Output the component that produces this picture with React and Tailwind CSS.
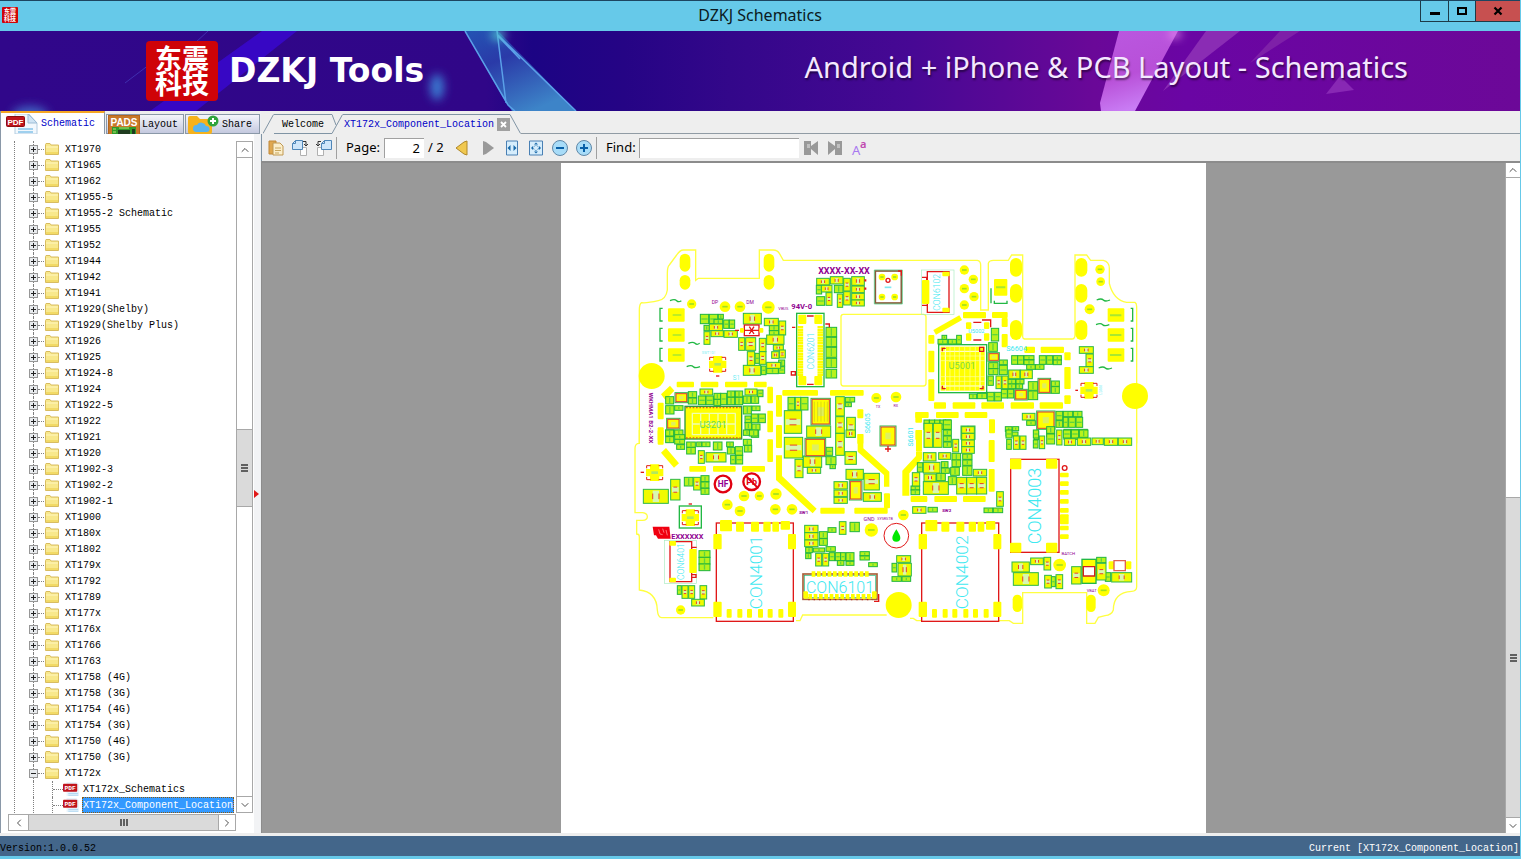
import React, { useState } from 'react';
import { ChevronUp, ChevronDown, ChevronLeft, ChevronRight } from 'lucide-react';

const FOLDERS = [
  'XT1970', 'XT1965', 'XT1962', 'XT1955-5', 'XT1955-2 Schematic', 'XT1955', 'XT1952', 'XT1944',
  'XT1942', 'XT1941', 'XT1929(Shelby)', 'XT1929(Shelby Plus)', 'XT1926', 'XT1925', 'XT1924-8',
  'XT1924', 'XT1922-5', 'XT1922', 'XT1921', 'XT1920', 'XT1902-3', 'XT1902-2', 'XT1902-1', 'XT1900',
  'XT180x', 'XT1802', 'XT179x', 'XT1792', 'XT1789', 'XT177x', 'XT176x', 'XT1766', 'XT1763',
  'XT1758 (4G)', 'XT1758 (3G)', 'XT1754 (4G)', 'XT1754 (3G)', 'XT1750 (4G)', 'XT1750 (3G)', 'XT172x',
];
const FILES = ['XT172x_Schematics', 'XT172x_Component_Location'];

// "x,y,w,h x,y,w,h ..." -> [[x, y, w, h], ...]
const parse = (list) => list.trim().split(/\s+/).map((item) => item.split(',').map(Number));

/* ---------- board drawing ---------- */

// plain copper pads
function Pads({ list }) {
  return parse(list).map(([x, y, w, h], i) => (
    <rect key={i} x={x} y={y} width={w} height={h} rx="3" fill="#ffff00" />
  ));
}

// test points, x,y,r
function Dots({ list }) {
  return parse(list).map(([x, y, r], i) => (
    <g key={i}>
      <circle cx={x} cy={y} r={r} fill="#ffff00" />
      {r < 25 && <path d={`M${x - r / 2},${y}h${r}`} stroke="#a0e020" strokeWidth="5" />}
    </g>
  ));
}

function Ovals({ list }) {
  return parse(list).map(([x, y, rx, ry], i) => (
    <rect key={i} x={x - rx} y={y - ry} width={rx * 2} height={ry * 2} rx={rx} fill="#ffff00" />
  ));
}

// small passives in green courtyards
function Small({ list }) {
  return parse(list).map(([x, y, w, h], i) => (
    <g key={i}>
      <rect x={x} y={y} width={w} height={h} fill="#b8f21c" stroke="#1fb53c" strokeWidth="3" />
      {w >= h ? (
        <path d={`M${x + w / 2},${y + 3}v${h - 6}`} stroke="#5fd63c" strokeWidth="4" />
      ) : (
        <path d={`M${x + 3},${y + h / 2}h${w - 6}`} stroke="#5fd63c" strokeWidth="4" />
      )}
    </g>
  ));
}

// two pad parts with a body gap and red silk ticks
function Parts({ list }) {
  return parse(list).map(([x, y, w, h], i) => {
    const wide = w >= h;
    const gap = Math.max(w, h) / 4;
    const cx = x + w / 2;
    const cy = y + h / 2;
    return (
      <g key={i}>
        <rect x={x} y={y} width={w} height={h} fill="#f0fb00" stroke="#2db84a" strokeWidth="3" />
        {wide ? (
          <>
            <rect x={cx - gap / 2} y={y + 4} width={gap} height={h - 8} fill="#d8f8b0" />
            <path d={`M${cx - gap / 2},${cy - h / 5}v${h / 2.5}M${cx + gap / 2},${cy - h / 5}v${h / 2.5}`} stroke="#e8402a" strokeWidth="3" />
          </>
        ) : (
          <>
            <rect x={x + 4} y={cy - gap / 2} width={w - 8} height={gap} fill="#d8f8b0" />
            <path d={`M${cx - w / 5},${cy - gap / 2}h${w / 2.5}M${cx - w / 5},${cy + gap / 2}h${w / 2.5}`} stroke="#e8402a" strokeWidth="3" />
          </>
        )}
      </g>
    );
  });
}

// ICs with a red body outline
function Chips({ list }) {
  return parse(list).map(([x, y, w, h], i) => (
    <g key={i}>
      <rect x={x} y={y} width={w} height={h} fill="#fff" stroke="#2db84a" strokeWidth="3" />
      <rect x={x + 3} y={y + 3} width={w - 6} height={h - 6} fill="#ffff00" stroke="#d8402a" strokeWidth="3" />
      <rect x={x + w / 3} y={y + h / 3} width={w / 3} height={h / 3} fill="#dff060" />
    </g>
  ));
}

function CrossPart({ x, y }) {
  return (
    <g transform={`translate(${x} ${y})`}>
      <path d="M12,0h28v14h12v22H40v14H12V36H0V14h12z" fill="#ffff00" />
      <path d="M2,12V4h12M38,4h12v8M2,38v8h12M38,46h12v-8" fill="none" stroke="#e02010" strokeWidth="3" />
      <path d="M16,25h20" stroke="#b0e860" strokeWidth="8" />
    </g>
  );
}

function Label({ x, y, size, fill = '#40e8f0', rotate = 0, weight = 300, children }) {
  return (
    <text
      transform={`translate(${x} ${y}) rotate(${rotate})`}
      fontSize={size}
      fontWeight={weight}
      fill={fill}
      textAnchor="middle"
      dominantBaseline="central"
      className="font-['Roboto',sans-serif]"
    >
      {children}
    </text>
  );
}

function SimSlot({ x, y, name }) {
  return (
    <g transform={`translate(${x} ${y})`}>
      <rect width="231" height="295" fill="none" stroke="#e01818" strokeWidth="4" />
      <Pads list="11,-9,36,34 59,-4,24,30 104,-4,24,30 141,-4,22,30 168,-4,20,30 193,-6,28,26 -9,33,25,46 215,33,24,46 -9,236,25,46 215,236,24,46 31,258,15,26 63,258,15,26 92,258,15,26 125,258,15,26 154,258,15,26 186,258,15,26" />
      <Label x={120} y={148} size={52} rotate={-90}>{name}</Label>
    </g>
  );
}

const line = { fill: 'none', stroke: '#ffff40', strokeWidth: 4 };
const green = { fill: 'none', stroke: '#22b844', strokeWidth: 4 };
const red = { fill: 'none', stroke: '#e01818', strokeWidth: 4 };
const purple = '#900090';

function TopLeft() {
  return (
    <g transform="translate(69 77) scale(0.33333)">
      <path {...line} d="M780,61H460L448,40Q442,30 430,30H388V115H205L197,121V30H160Q150,30 140,45L118,75Q112,80 112,100V150Q108,178 85,182Q50,190 35,188Q28,192 28,210V610" />
      <path {...line} d="M780,223H640Q633,223 633,230V430Q633,438 640,438H780" />
      <Ovals list="165,68,16,27 165,127,16,22 417,68,16,27 417,127,16,22" />
      <Dots list="65,408,39 185,192,14 285,200,16 330,200,16 415,202,19 739,474,15" />
      <Pads list="114,205,50,40 114,265,50,40 114,325,50,40" />
      <path d="M128,225h26M128,285h26M128,345h26" stroke="#a8e830" strokeWidth="5" />
      <path {...green} d="M98,205H90V243H98M98,265H90V303H98M98,325H90V363H98M120,182q14,-6 20,0t14,0M175,310q14,-6 20,0t14,0M170,380q14,-6 20,0t20,0" />
      <Pads list="140,425,52,17 212,425,53,17 285,425,67,17 372,425,38,17 412,440,17,50 412,512,17,65 457,450,107,17 600,450,101,17 438,465,18,65 438,555,18,45 83,488,18,50 83,562,18,40 682,508,18,27 682,582,18,30" />
      <path d="M93,463l27,-26 13,15 -27,28z" fill="#ffff00" />

      <Small list="211,223,25,28 238,223,25,28 265,223,15,14 252,238,26,14 281,240,16,25 298,240,16,25 222,256,16,16 418,256,28,16 418,272,28,14 375,340,14,30 446,360,18,18 446,380,18,20 410,385,35,16 394,378,14,26" />
      <Parts list="238,252,40,20 222,275,18,38 243,272,37,18 282,272,40,20 340,220,54,32 403,235,42,22 447,243,20,42 410,285,52,28 326,293,18,38 347,293,30,38 388,295,20,40 430,315,30,16 448,330,18,24 425,335,22,20 352,335,22,42 388,335,20,38 410,367,42,18 340,376,52,30" />
      <rect x="343" y="255" width="44" height="32" {...red} />
      <path {...red} d="M343,271h44M358,260l14,22M372,260l-14,22M315,271h12" />
      <Pads list="330,264,12,14 388,264,12,14" />
      <CrossPart x={237} y={348} />
      <path {...red} d="M258,408h10" />
      <Label x={236} y={338} size={11}>SWT101</Label>
      <Small list="559,136,16,26 560,170,24,26 613,136,26,22 588,262,32,28 588,292,32,28 588,322,32,30 588,355,32,28 588,388,32,26" />
      <Parts list="560,115,38,20 601,110,38,22 574,136,32,20 588,158,18,38 641,115,20,38 641,155,20,40 622,162,16,40 665,110,38,26 665,138,38,20 665,160,38,20 665,180,38,18" />
      <path d="M703,121h6M703,146h6" stroke="#e01818" strokeWidth="7" />

      {/* CON6201 */}
      <rect x="500" y="220" width="82" height="220" fill="#fff" stroke="#22b844" strokeWidth="4" />
      <path d="M511,258V408M571,258V408" stroke="#ffff00" strokeWidth="17" strokeDasharray="7 1" />
      <Pads list="505,224,24,28 553,224,24,28 505,408,24,28 553,408,24,28" />
      <path {...red} d="M531,228h20M531,433h20M486,262h10M484,395h12v10h-12zM586,252h12v10" />
      <Label x={543} y={333} size={26} rotate={-90}>CON6201</Label>

      {/* U3201 */}
      <rect x="165" y="499" width="170" height="98" fill="#ffff00" stroke="#2f9a40" strokeWidth="4" />
      <path d="M168,503h164M168,594h164" stroke="#d86020" strokeWidth="4" strokeDasharray="5 5" />
      <path d="M185,520h132M185,552h132M185,584h132M187,520v64M212,520v64M238,520v64M264,520v64M290,520v64M316,520v64" stroke="#f0ffb0" strokeWidth="4" />
      <Label x={249} y={554} size={28} fill="#60d860" weight={400}>U3201</Label>
      <Small list="107,470,24,22 175,455,25,18 175,474,25,18 205,468,22,26 228,468,22,26 252,460,20,18 252,478,20,18 272,460,18,34 292,453,22,18 292,472,22,22 316,453,22,18 316,472,22,22 340,468,22,22 364,468,22,22 383,450,16,20 107,497,25,25 134,497,25,14 107,570,25,20 134,570,25,20 340,498,24,24 366,498,24,14 364,522,20,26 386,522,20,26 345,528,18,20 345,548,20,20 366,552,24,18 340,570,22,16 364,572,22,20" />
      <Parts list="210,447,38,18 345,447,36,18" />
      <Chips list="135,458,38,30 110,535,40,32" />

      <Small list="474,472,20,38 512,472,22,38 646,472,28,14 646,488,18,12" />
      <Parts list="496,472,16,38 463,512,52,68 617,470,26,58 617,530,26,50 650,532,26,60 530,558,72,34" />
      <Chips list="543,475,58,80" />
      <path d="M553,485v60M563,485v60M573,485v60M583,485v60M592,485v60" stroke="#c8c820" strokeWidth="2" />

      {/* square part next to the marking */}
      <rect x="736" y="93" width="78" height="96" fill="#fff" stroke="#8a5a3a" strokeWidth="5" />
      <path d="M733,90h84v102h-84z" fill="none" stroke="#40c878" strokeWidth="2" />
      <Dots list="756,111,10 794,111,10 756,171,10 794,171,10" />
      <path {...red} d="M804,93h10v14" />
      <circle cx="774" cy="121" r="6" {...red} />
      <path d="M764,142h20" stroke="#80e8f0" strokeWidth="5" />

      <Label x={642} y={92} size={27} fill={purple} weight={700}>XXXX-XX-XX</Label>
      <Label x={515} y={199} size={23} fill={purple} weight={700}>94V-0</Label>
      <Label x={255} y={185} size={15} fill={purple} weight={400}>DP</Label>
      <Label x={360} y={185} size={15} fill={purple} weight={400}>DM</Label>
      <Label x={460} y={207} size={12} fill={purple} weight={400}>VBUS</Label>
      <Label x={65} y={534} size={18} fill={purple} weight={700} rotate={90}>WKHMA1 B2-2-XX</Label>
      <Label x={319} y={415} size={19}>S1</Label>
      <Label x={715} y={550} size={21} rotate={-90} weight={400}>S6605</Label>
      <Label x={744} y={500} size={11} fill={purple} weight={400}>TX</Label>
    </g>
  );
}

function TopRight() {
  return (
    <g transform="translate(319 77) scale(0.33333)">
      <path {...line} d="M0,61H292Q302,63 302,75V210H325V70Q327,61 340,61H385L395,45H428V290Q428,298 440,297H575Q585,297 585,285V45H620L632,61H670Q688,65 688,85V130Q700,180 740,187H765Q770,190 770,200V610" />
      <path {...line} d="M0,223H130Q138,223 138,230V430Q138,438 130,438H0" />
      <Ovals list="408,82,18,28 408,160,18,28 408,270,18,30 604,82,18,28 604,160,18,28 604,270,18,30" />
      <Dots list="253,90,14 280,118,14 253,146,14 282,170,14 253,195,14 660,88,14 662,125,13 629,208,15 765,468,39 48,471,16" />
      <Pads list="342,117,40,50 683,205,50,40 683,265,50,40 683,325,50,40" />
      <path d="M348,142h28M690,226h34M690,285h34M690,345h34" stroke="#a8e830" strokeWidth="6" />
      <path {...green} d="M752,205H758V243H752M752,265H758V303H752M752,325H758V363H752M343,182V190H381V182M333,145V190M650,180q14,-6 20,0t20,0M648,254q14,-6 20,0t20,0M656,384q14,-6 20,0t20,0" />
      <Pads list="249,216,69,19 145,285,18,26 145,332,18,65 145,418,18,65 336,216,47,18 365,234,18,27 365,282,18,40 162,487,36,19 218,487,68,19 304,487,68,19 392,487,70,19 479,487,70,19 106,516,40,18 168,516,68,18 254,516,68,18 106,516,20,32 106,570,20,30 327,538,18,42 433,320,32,19 482,320,70,19 553,337,19,24 553,381,19,66 553,466,19,26" />
      <path d="M160,270l78,-44 8,14 -78,44z" fill="#ffff00" />

      {/* CON6102 */}
      <rect x="124" y="90" width="98" height="133" fill="none" stroke="#a8ecc0" strokeWidth="2" />
      <path {...red} d="M142,95h65v122h-65zM126,112h14v8M126,196h14" />
      <Pads list="126,120,22,72 187,95,22,14 187,203,22,14" />
      <Label x={170} y={157} size={26} rotate={-90}>CON6102</Label>

      <Pads list="258,247,16,20 258,280,16,22 312,247,16,20 312,280,16,22" />
      <path {...red} d="M280,247h24M280,300h24M306,240h26v22" />
      <Label x={289} y={274} size={17} weight={400}>U5002</Label>

      {/* U5001 */}
      <rect x="176" y="314" width="144" height="144" fill="#fff" stroke="#22b844" strokeWidth="4" />
      <rect x="182" y="320" width="132" height="132" fill="#ffff00" />
      <path d="M182,334h132M182,438h132M196,320v132M300,320v132" stroke="#fffff0" strokeWidth="3" />
      <path d="M182,348h132M182,362h132M182,410h132M182,424h132M210,320v132M224,320v132M238,320v132M254,320v132M270,320v132M286,320v132" stroke="#ffffa0" strokeWidth="2" />
      <path {...red} d="M187,334v-9h10M187,437v9h10M299,446h10v-9M299,322h12v12h-12z" />
      <Label x={246} y={378} size={28} fill="#80dc40" weight={400}>U5001</Label>

      <Small list="174,298,28,14 186,286,14,12 205,298,24,14 230,286,14,26 334,265,22,38 326,308,26,26 326,368,28,18 326,386,28,18 358,360,24,14 358,376,24,28 395,347,18,26 413,347,18,26 432,347,30,12 432,360,30,14 478,347,20,26 500,347,18,26 520,347,24,14 520,360,24,14 440,374,26,14 466,374,26,14 383,418,24,14 408,418,24,14 383,432,24,14 408,432,20,14 324,408,16,28 364,448,18,26 383,448,18,26 445,453,28,26 445,425,28,26 514,423,24,16 514,440,24,20 268,462,22,14 292,460,28,16 322,457,20,26 344,457,20,26" />
      <Parts list="348,408,16,38 366,408,18,38 386,390,34,26 421,390,36,26 598,320,42,20 618,342,22,38 598,380,42,20 427,520,38,20" />
      <Chips list="324,338,34,26 404,448,38,32 474,415,38,45 470,513,55,55" />
      <CrossPart x={601} y={426} />
      <path {...red} d="M586,451h8" />
      <Label x={664} y={450} size={11} rotate={-90}>U5000</Label>

      <Small list="440,542,26,14 528,514,20,26 550,514,28,16 580,514,26,16 528,542,20,20 550,532,14,30 566,532,20,30 588,532,20,30 132,540,16,28 148,540,16,28 164,540,16,28 180,540,16,28 196,540,16,28 376,560,20,14 398,560,18,12 378,576,36,12 462,575,14,24 500,570,24,20 552,568,20,30 574,568,20,30 596,568,26,28" />
      <Parts list="243,558,20,40 265,558,20,40" />

      <Label x={410} y={325} size={22} weight={400}>S6604</Label>
      <Label x={93} y={590} size={21} rotate={-90} weight={400}>S6601</Label>
      <Label x={47} y={497} size={11} fill={purple} weight={400}>RX</Label>
    </g>
  );
}

function BottomLeft() {
  return (
    <g transform="translate(69 267) scale(0.33333)">
      <path {...line} d="M28,0V40Q15,40 15,55V248H38Q52,250 52,260T38,271H20V312Q28,312 28,320V480Q80,485 82,540Q84,563 95,563H250M498,572H510L518,555H750" />
      <Pads list="83,0,18,44 178,108,50,17 249,108,68,17 336,108,69,17 412,28,17,68 438,0,18,54 571,233,73,18 673,233,100,18 762,190,18,45" />
      <path d="M93,68l15,-14 39,46 -15,13zM438,76h18v62L560,236l-12,14L438,150zM683,12h17v43l78,70v45h-16v-35L683,65z" fill="#ffff00" />
      <Dots list="342,198,16 388,198,14 438,192,17 292,224,16 330,243,16 436,238,16 486,238,16 724,300,20 152,540,14" />

      <Small list="107,0,24,18 107,20,24,18 140,44,24,14 134,14,30,14 134,28,30,14 170,36,26,16 170,52,26,20 200,36,14,14 216,36,24,14 250,36,26,24 290,36,20,14 292,52,22,20 316,50,22,26 302,76,14,26 318,76,20,26 340,28,24,18 343,46,22,20 358,0,26,18 588,52,20,24 588,80,30,24 600,104,16,12 163,142,26,26 213,137,24,18 213,156,24,18 213,175,24,18 207,362,33,20 207,382,33,20 207,402,33,20 142,467,12,26 568,305,24,20 568,326,24,20 594,293,24,14 660,277,28,28 527,352,20,16 527,370,16,16 550,354,34,12 588,350,28,14 598,368,16,24 616,368,16,24 632,368,14,24 648,368,24,24 622,392,20,14 648,394,24,12 690,365,28,12 690,378,28,12 716,398,26,12" />
      <Parts list="205,62,18,38 228,68,60,28 463,22,55,62 495,88,24,55 520,78,55,34 532,112,40,18 617,10,26,66 645,65,34,38 648,0,28,22 648,118,52,30 612,155,40,22 612,180,40,20 612,202,40,18 702,130,46,50 700,188,54,26 40,178,75,42 122,148,28,62 191,142,20,38 156,467,18,38 176,467,18,38 210,467,20,40 185,508,38,20 524,286,40,22 524,308,40,22 524,330,40,20 628,275,20,38 557,370,18,38 578,370,18,38" />
      <Chips list="525,25,62,55 658,152,38,58" />
      <CrossPart x={48} y={103} />
      <path {...red} d="M32,127h10" />
      <rect x="148" y="228" width="66" height="66" fill="#fff" stroke="#22b844" strokeWidth="4" />
      <CrossPart x={155} y={238} />
      <path {...red} d="M176,222h10" />

      <circle cx="279" cy="162" r="25" fill="none" stroke="#e00010" strokeWidth="7" />
      <Label x={279} y={163} size={25} fill={purple} weight={700}>HF</Label>
      <circle cx="365" cy="155" r="25" fill="none" stroke="#e00010" strokeWidth="7" />
      <Label x={365} y={156} size={27} fill="#e00010" weight={700}>Pb</Label>
      <path d="M348,138l34,34" stroke="#e00010" strokeWidth="6" />

      {/* UL mark */}
      <path d="M68,290h50l4,36h-38l-6,-10h-6z" fill="#f00010" />
      <path d="M86,298l4,14 8,2M98,296l4,12M108,300l4,16" fill="none" stroke="#ffb0b0" strokeWidth="2" />
      <Label x={172} y={319} size={22} fill={purple} weight={700}>EXXXXXX</Label>

      {/* CON6401 */}
      <rect x="103" y="332" width="97" height="128" fill="none" stroke="#a8ecc0" strokeWidth="2" />
      <path {...red} d="M120,335h65v120h-65zM186,352h14M186,434h12v8h-12" />
      <Pads list="178,357,22,72 118,333,20,14 118,443,20,14" />
      <Label x={152} y={395} size={26} rotate={-90}>CON6401</Label>

      <SimSlot x={259} y={279} name="CON4001" />

      {/* CON6101 */}
      <rect x="519" y="432" width="222" height="76" fill="#fff" stroke="#a8603a" strokeWidth="5" />
      <rect x="524" y="437" width="212" height="66" fill="none" stroke="#22b87a" strokeWidth="2" />
      <path d="M545,432H718M535,500H728" stroke="#ffff00" strokeWidth="16" strokeDasharray="11 5" />
      <path d="M535,509H728" stroke="#b02020" strokeWidth="4" strokeDasharray="4 12" />
      <Pads list="520,484,14,22 726,484,14,22" />
      <path {...red} d="M732,514h14v-22" />
      <Label x={630} y={473} size={48}>CON6101</Label>

      <Label x={521} y={249} size={13} fill={purple} weight={700}>SW1</Label>
      <Label x={717} y={268} size={16} fill={purple} weight={400}>GND</Label>
      <Label x={765} y={268} size={11} fill={purple} weight={400}>SYSRSTB</Label>
    </g>
  );
}

function BottomRight() {
  return (
    <g transform="translate(319 267) scale(0.33333)">
      <path {...line} d="M770,0V470Q770,483 755,484Q700,487 700,540Q695,555 675,557L655,562L645,580H620V488H428V580H400L388,572H355M125,572H110L100,565H90M0,555H20" />
      <Pads list="108,0,18,65 92,198,50,18 163,198,68,18 249,198,68,18 326,30,18,66 326,117,18,68" />
      <path d="M108,65h18v22L88,130v67H67v-75L108,78z" fill="#ffff00" />
      <Ovals list="412,520,14,26 633,520,14,26" />
      <Dots list="70,255,16 539,405,19 671,481,18 56,525,39" />

      <Chips list="0,-12,48,60" />
      <path {...red} d="M24,48v18M15,57h18" />
      <circle cx="49" cy="317" r="37" fill="none" stroke="#e01818" strokeWidth="3" />
      <path d="M49,298q12,18 12,26a12,11 0 0 1 -24,0q0,-8 12,-26z" fill="#00e800" />

      <Small list="190,-30,24,28 190,0,24,16 190,18,24,16 190,36,24,16 112,98,16,28 93,168,26,12 93,180,26,14 170,130,26,22 184,95,20,18 184,114,24,16 216,70,26,20 216,90,26,20 212,112,26,24 205,140,24,24 248,72,28,16 248,90,28,16 248,108,28,28 378,0,18,24 380,28,14,30 460,0,16,24 460,30,14,24 500,-10,24,20 500,12,24,30 550,0,22,24 574,0,22,24 598,0,26,22 312,234,26,14 340,234,28,14 144,232,28,14 36,400,14,26 36,440,28,14 66,440,26,14 514,440,12,30 650,382,28,16 676,428,16,26" />
      <Parts list="132,-20,26,72 160,-20,26,72 218,28,18,38 245,-10,38,20 245,10,38,20 245,30,38,20 245,50,38,20 130,68,38,25 176,68,36,20 130,97,50,32 97,128,22,40 130,155,75,38 132,132,36,22 280,118,40,20 230,142,30,50 260,142,30,50 290,142,30,50 400,18,18,40 420,18,18,40 478,18,16,38 530,0,16,45 553,26,34,20 592,24,40,22 636,24,34,20 673,24,40,22 715,24,40,22 350,185,20,44 98,230,40,20 50,377,42,20 54,400,40,38 396,396,52,30 400,428,75,38 452,384,38,20 492,382,20,38 494,436,20,38 528,434,20,42 575,410,28,52 650,400,28,50 695,428,60,28" />
      <rect x="606" y="388" width="42" height="72" fill="#ffff00" stroke="#22b844" strokeWidth="4" />
      <path d="M610,410h34v28h-34z" fill="#fff" stroke="#d02020" strokeWidth="4" />
      <Pads list="686,394,16,24 738,394,16,24" />
      <path d="M702,392h34v30h-34z" fill="none" stroke="#e06050" strokeWidth="4" />

      <SimSlot x={125} y={279} name="CON4002" />

      {/* CON4003 */}
      <rect x="392" y="88" width="145" height="279" {...red} />
      <Pads list="390,86,34,32 498,86,34,30 390,338,34,30 498,338,34,30 540,128,26,14 540,154,26,14 540,180,26,14 540,207,26,14 540,234,26,14 540,253,26,30 540,287,26,14 540,313,26,14" />
      <circle cx="554" cy="114" r="7" {...red} />
      <Label x={465} y={228} size={54} rotate={-90}>CON4003</Label>

      <Label x={200} y={242} size={13} fill={purple} weight={700}>SW2</Label>
      <Label x={565} y={372} size={13} fill={purple} weight={400}>BATCH</Label>
      <Label x={635} y={482} size={12} fill={purple} weight={400}>VBAT</Label>
    </g>
  );
}

function Board() {
  return (
    <svg viewBox="0 0 645 670" className="block w-full" role="img" aria-label="XT172x component location">
      <TopLeft />
      <TopRight />
      <BottomLeft />
      <BottomRight />
    </svg>
  );
}

/* ---------- window chrome ---------- */

function SealLogo({ className }) {
  return (
    <svg viewBox="0 0 72 60" preserveAspectRatio="none" className={className} aria-hidden="true">
      <rect width="72" height="60" rx="4" fill="#cf0308" />
      <g fill="#fff" fontSize="27" fontWeight="700" textAnchor="middle" className="font-['Noto_Sans_CJK_SC',sans-serif]">
        <text x="36" y="28">东震</text>
        <text x="36" y="53">科技</text>
      </g>
    </svg>
  );
}

function TitleBar() {
  return (
    <header className="flex h-[31px] shrink-0 items-start border-t border-[#1d4560] bg-[#66c9e9]">
      <div className="flex w-[100px] pl-[2px] pt-[6px]">
        <SealLogo className="size-4" />
      </div>
      <h1 className="flex-1 text-center font-['Noto_Sans',sans-serif] text-[16px] leading-[29px] text-[#0b1a22]">DZKJ Schematics</h1>
      <div className="flex h-[21px] w-[100px] justify-end">
        <button aria-label="Minimize" className="flex w-[28px] items-center justify-center border-b border-l border-[#1d3a48]">
          <svg viewBox="0 0 10 10" className="size-[10px]"><path d="M0,6h10v3H0z" fill="#000" /></svg>
        </button>
        <button aria-label="Maximize" className="flex w-[27px] items-center justify-center border-b border-l border-[#1d3a48]">
          <svg viewBox="0 0 10 10" className="size-[10px]"><path d="M1,2h8v6H1z" fill="none" stroke="#000" strokeWidth="2" /></svg>
        </button>
        <button aria-label="Close" className="flex w-[45px] items-center justify-center border-b border-l border-[#1d3a48] bg-[#c75050]">
          <svg viewBox="0 0 10 10" className="size-[10px]"><path d="M1.5,1.5l7,7M8.5,1.5l-7,7" stroke="#000" strokeWidth="2.2" /></svg>
        </button>
      </div>
    </header>
  );
}

function Banner() {
  return (
    <div className="relative flex h-20 shrink-0 items-center overflow-hidden bg-[#300989]">
      <svg viewBox="0 0 1520 80" preserveAspectRatio="none" className="absolute inset-0 size-full" aria-hidden="true">
        <defs>
          <linearGradient id="bg" x1="0" x2="1">
            <stop offset="0" stopColor="#30078a" />
            <stop offset="0.32" stopColor="#300688" />
            <stop offset="0.35" stopColor="#1c0484" />
            <stop offset="0.41" stopColor="#250485" />
            <stop offset="0.48" stopColor="#33078a" />
            <stop offset="0.6" stopColor="#470894" />
            <stop offset="0.72" stopColor="#6a0898" />
            <stop offset="0.78" stopColor="#6a05a4" />
            <stop offset="1" stopColor="#6c0898" />
          </linearGradient>
          <linearGradient id="blue" x1="0" y1="0" x2="0.6" y2="1">
            <stop offset="0" stopColor="#2454b4" />
            <stop offset="0.4" stopColor="#2a3aa8" />
            <stop offset="1" stopColor="#3d84c8" />
          </linearGradient>
          <linearGradient id="pink" x1="0" y1="0" x2="0.3" y2="1">
            <stop offset="0" stopColor="#ba58e0" />
            <stop offset="0.6" stopColor="#b850d8" />
            <stop offset="1" stopColor="#c97cf4" />
          </linearGradient>
          <filter id="soft" x="-100%" y="-100%" width="300%" height="300%">
            <feGaussianBlur stdDeviation="5" />
          </filter>
        </defs>
        <rect width="1520" height="80" fill="url(#bg)" />
        <path d="M150,80L262,0H297L196,80z" fill="#3908d8" opacity="0.75" />
        <path d="M195,12L208,0M125,52L170,18" stroke="#4a4ac8" opacity="0.6" />
        <path d="M465,0H498L576,80H512L505,70z" fill="url(#blue)" />
        <path d="M465,0L508,74L515,80M497,0L506,72M498,4L576,80M498,5L520,28" fill="none" stroke="#5aa0e8" strokeWidth="1.5" />
        <ellipse cx="437" cy="56" rx="7" ry="13" fill="#3a78d0" filter="url(#soft)" />
        <ellipse cx="498" cy="4" rx="7" ry="5" fill="#50c8d0" filter="url(#soft)" />
        <ellipse cx="30" cy="84" rx="18" ry="9" fill="#4060c0" filter="url(#soft)" />
        <path d="M1206,0H1240L1163,60z" fill="#8a2cb4" />
        <path d="M1178,0L1135,80H1101L1100,72L1119,0z" fill="url(#pink)" />
        <path d="M1280,0h20l-50,32z" fill="#7e20a8" />
        <path d="M1340,45l14,14 -28,4z" fill="#8828b4" />
        <ellipse cx="1175" cy="3" rx="6" ry="4" fill="#e890f0" filter="url(#soft)" />
      </svg>
      <div className="relative flex w-full items-center pl-[146px]">
        <SealLogo className="h-[60px] w-[72px]" />
        <p className="ml-[11px] font-['DejaVu_Sans',sans-serif] text-[33px] font-bold leading-10 text-white">DZKJ Tools</p>
        <p className="mb-2 ml-auto mr-28 font-['Noto_Sans',sans-serif] text-[29px] leading-10 text-[#f4e8ff] [text-shadow:1px_2px_2px_#00000080]">
          Android + iPhone &amp; PCB Layout - Schematics
        </p>
      </div>
    </div>
  );
}

function PdfIcon({ className }) {
  return (
    <svg viewBox="0 0 32 20" className={className} aria-hidden="true">
      <path d="M9,0h14l8,9v11H9z" fill="#f2f8fd" stroke="#b4cde0" />
      <path d="M22,0v9h9z" fill="#cfe4f4" stroke="#9dbdd6" />
      <path d="M12,15h15M12,18h15" stroke="#9fd0ee" strokeWidth="2" />
      <rect x="0.5" y="2.5" width="18" height="10" rx="1" fill="#c0141c" stroke="#8c0c10" />
      <text x="9.500" y="11" fontSize="8" fontWeight="700" fill="#fff" textAnchor="middle" className="font-['Liberation_Sans',sans-serif]">PDF</text>
    </svg>
  );
}

function PadsIcon() {
  return (
    <svg viewBox="0 0 32 19" className="h-[19px] w-8" aria-hidden="true">
      <rect width="32" height="19" fill="#b5651c" />
      <rect x="1" y="1" width="30" height="18" fill="#c87828" />
      <path d="M4,12h24v7H4z" fill="#2f9a28" />
      <path d="M10,15h12v4H10zM24,14h3v5h-3z" fill="#203c20" />
      <path d="M5,14h3M5,17h3M11,13h10" stroke="#b8e070" />
      <text x="16" y="11" fontSize="10" fontWeight="700" fill="#fff" textAnchor="middle" className="font-['Liberation_Sans',sans-serif]">PADS</text>
    </svg>
  );
}

function ShareIcon() {
  return (
    <svg viewBox="0 0 32 19" className="h-[19px] w-8" aria-hidden="true">
      <path d="M1,3q0,-2 2,-2h7l3,3h10q2,0 2,2v11q0,2 -2,2H3q-2,0 -2,-2z" fill="#f6b21c" />
      <path d="M9,17a3.500,3.500 0 0 1 1,-7a5,5 0 0 1 9,1a3,3 0 0 1 1,6z" fill="#59b4ee" />
      <circle cx="26" cy="6" r="5.500" fill="#2fa33c" />
      <path d="M26,3v6M23,6h6" stroke="#fff" strokeWidth="2" />
    </svg>
  );
}

function FolderIcon() {
  return (
    <svg viewBox="0 0 14 12" className="h-3 w-[14px] shrink-0" aria-hidden="true">
      <path d="M0.500,1.500l0.500,-1h4l1,1.500h7.500v9.500h-13z" fill="#f8e88c" stroke="#d8bc60" />
      <path d="M1,4h12" stroke="#fff6c0" />
      <path d="M1,9h12v2H1z" fill="#f2da66" />
    </svg>
  );
}

function TreeIcon({ open }) {
  return (
    <svg viewBox="0 0 9 9" className="size-[9px]" aria-hidden="true">
      <rect x="0.500" y="0.500" width="8" height="8" fill="#e8ebee" stroke="#979797" />
      <path d={open ? 'M2,4.500h5' : 'M2,4.500h5M4.500,2v5'} stroke="#222" />
    </svg>
  );
}

const sideTab = 'flex h-[20px] items-center border border-[#8a98a8] bg-linear-to-b from-[#f4f5fb] to-[#c4c9df] pl-[1px] text-black';

function Sidebar() {
  const [selected, setSelected] = useState('XT172x_Component_Location');

  return (
    <aside className="flex w-[260px] shrink-0 flex-col border-l border-[#8a98a8] bg-white">
      <div role="tablist" className="flex h-[23px] shrink-0 items-end gap-px bg-[#eeeeee] text-[10px]">
        <button role="tab" aria-selected="true" className="flex h-[23px] w-[104px] items-center border-r border-t-2 border-r-[#8a98a8] border-t-[#f5a623] bg-white pl-[5px] text-[#0000c8]">
          <PdfIcon className="mr-[3px] h-[20px] w-8" />
          Schematic
        </button>
        <button role="tab" className={`${sideTab} w-[78px]`}>
          <PadsIcon />
          <span className="ml-[2px]">Layout</span>
        </button>
        <button role="tab" className={`${sideTab} w-[68px] grow`}>
          <ShareIcon />
          <span className="ml-[3px]">Share</span>
        </button>
      </div>

      <div className="flex min-h-0 flex-1 flex-col border-r-[6px] border-[#f2f3f5] pb-[2px] pl-[7px] pr-[1px] pt-[7px]">
        <div className="flex min-h-0 flex-1">
          <ul role="tree" className="ml-[6px] min-w-0 flex-1 overflow-hidden border-l border-dotted border-[#808080] text-[10px] text-black">
            {FOLDERS.map((name) => (
              <li key={name} role="treeitem" className="ml-[14px] flex h-4 items-center">
                <button aria-label={`Toggle ${name}`} className="flex h-4 flex-col items-center">
                  <span className="h-[4px] border-l border-dotted border-[#808080]" />
                  <TreeIcon open={name === 'XT172x'} />
                  <span className="h-[3px] border-l border-dotted border-[#808080]" />
                </button>
                <span className="mr-px w-[6px] border-t border-dotted border-[#808080]" />
                <FolderIcon />
                <span className="ml-[6px] whitespace-nowrap">{name}</span>
              </li>
            ))}
            {FILES.map((name) => (
              <li key={name} role="treeitem" aria-selected={selected === name} className="ml-[18px] flex h-4 items-center border-l border-dotted border-[#808080]">
                <span className="ml-[18px] h-4 w-px border-l border-dotted border-[#808080]" />
                <span className="w-[10px] border-t border-dotted border-[#808080]" />
                <svg viewBox="0 0 18 16" className="h-4 w-[16px] shrink-0" aria-hidden="true">
                  <path d="M4,0h11l3,3v13H4z" fill="#e8f4fc" />
                  <path d="M6,13h11M6,15h11" stroke="#a8d4f0" />
                  <rect y="2" width="16" height="9" rx="1" fill="#c0141c" />
                  <text x="8" y="9.500" fontSize="7" fontWeight="700" fill="#fff" textAnchor="middle">PDF</text>
                </svg>
                <button
                  onClick={() => setSelected(name)}
                  className={`ml-[3px] flex h-4 items-center whitespace-nowrap px-px pt-px ${selected === name ? 'bg-[#3399ff] text-white outline-1 -outline-offset-1 outline-dotted outline-[#8a5a10]' : ''}`}
                >
                  {name}
                </button>
              </li>
            ))}
          </ul>
          <div className="flex w-[17px] shrink-0 flex-col border border-[#a8a8a8] bg-white">
            <button aria-label="Scroll up" className="flex h-4 items-center justify-center border-b border-[#a8a8a8]"><ChevronUp className="size-3 text-[#505050]" /></button>
            <div className="flex-[272]" />
            <div className="flex flex-[76] items-center justify-center border-y border-[#a8a8a8] bg-[#dadada]">
              <div className="h-[8px] w-[7px] border-y-2 border-[#606060] py-px"><div className="h-[2px] bg-[#606060]" /></div>
            </div>
            <div className="flex-[290]" />
            <button aria-label="Scroll down" className="flex h-4 items-center justify-center border-t border-[#a8a8a8]"><ChevronDown className="size-3 text-[#505050]" /></button>
          </div>
        </div>
        <div className="mr-[17px] mt-px flex h-[17px] shrink-0 border border-[#a8a8a8] bg-white">
          <button aria-label="Scroll left" className="flex w-[20px] items-center justify-center border-r border-[#a8a8a8]"><ChevronLeft className="size-3 text-[#505050]" /></button>
          <div className="flex flex-1 items-center justify-center bg-[#dadada]">
            <div className="flex h-[7px] w-[8px] justify-between">
              <span className="w-[2px] bg-[#606060]" /><span className="w-[2px] bg-[#606060]" /><span className="w-[2px] bg-[#606060]" />
            </div>
          </div>
          <button aria-label="Scroll right" className="flex w-[17px] items-center justify-center border-l border-[#a8a8a8]"><ChevronRight className="size-3 text-[#505050]" /></button>
        </div>
      </div>
    </aside>
  );
}

function Slant({ d }) {
  return (
    <svg viewBox="0 0 11 20" className="h-5 w-[11px] shrink-0" aria-hidden="true">
      <path d={d} fill="none" stroke="#8094a4" />
    </svg>
  );
}

function DocumentTabs() {
  return (
    <div role="tablist" className="flex h-[23px] shrink-0 items-end pl-[2px] text-[10px]">
      <Slant d="M0,19.500L10.500,0.500" />
      <button role="tab" className="h-5 border-b border-t border-[#8094a4] px-[8px] text-black">Welcome</button>
      <Slant d="M0,0.500L4,11M0,19.500L10.500,0.500" />
      <div className="flex h-5 items-center border-t border-[#8094a4] pl-px">
        <button role="tab" aria-selected="true" className="text-[#0000c8]">XT172x_Component_Location</button>
        <button aria-label="Close tab" className="ml-[3px] flex size-[13px] items-center justify-center bg-[#a0a0a0]">
          <svg viewBox="0 0 7 7" className="size-[7px]"><path d="M1,1l5,5M6,1l-5,5" stroke="#fff" strokeWidth="1.8" /></svg>
        </button>
      </div>
      <Slant d="M0,0.500L10.500,19.500" />
      <div className="flex-1 self-stretch border-b border-[#909ba4]" />
    </div>
  );
}

function Tool({ label, children }) {
  return (
    <button aria-label={label} className="flex size-6 items-center justify-center">
      <svg viewBox="0 0 16 16" className="size-4 overflow-visible">{children}</svg>
    </button>
  );
}

function Toolbar() {
  const [page, setPage] = useState('2');
  const [find, setFind] = useState('');

  return (
    <div className="flex h-[27px] shrink-0 items-center border-l border-[#8094a4] pl-[2px] font-['Noto_Sans',sans-serif] text-[13px] text-black">
      <Tool label="Open">
        <path d="M1,1h7v13H1z" fill="#e0a850" stroke="#c08838" />
        <path d="M5,3h7l3,3v9H5z" fill="#fbeecb" stroke="#c09850" />
        <path d="M7,8h6M7,10.500h6M7,13h4" stroke="#c8a860" />
      </Tool>
      <Tool label="Rotate right">
        <path d="M8.500,7.500h6v8h-6z" fill="#fdfdfd" stroke="#b0b0b0" />
        <path d="M3.500,0.500h7v9h-10v-6z" fill="#cfe6fa" stroke="#4f86b8" />
        <path d="M0.500,3.500h3v-3" fill="none" stroke="#4f86b8" />
        <path d="M11,1.500h3v4M12,4l2,2 2,-2" fill="none" stroke="#333" />
      </Tool>
      <Tool label="Rotate left">
        <path d="M1.500,7.500h6v8h-6z" fill="#fdfdfd" stroke="#b0b0b0" />
        <path d="M8.500,0.500h7v9h-10v-6z" fill="#cfe6fa" stroke="#4f86b8" />
        <path d="M5.500,3.500h3v-3" fill="none" stroke="#4f86b8" />
        <path d="M5,1.500H2v4M0,4l2,2 2,-2" fill="none" stroke="#333" />
      </Tool>
      <span className="h-[22px] w-px bg-[#a0a0a0]" />
      <label htmlFor="page" className="ml-[9px] w-[38px]">Page:</label>
      <input id="page" value={page} onChange={(e) => setPage(e.target.value)} className="h-[20px] w-[40px] border-l border-t border-[#a0a0a0] bg-white pr-[4px] text-right outline-none" />
      <span className="ml-[4px] w-[22px] whitespace-nowrap">/ 2</span>
      <Tool label="Previous page">
        <path d="M13,1v14l-3,-1 -8,-6 8,-6z" fill="#f0c850" stroke="#b08828" />
      </Tool>
      <button aria-label="Next page" className="ml-[2px] flex size-6 items-center justify-center">
        <svg viewBox="0 0 16 16" className="size-4"><path d="M3,1v14l3,-1 8,-6 -8,-6z" fill="#999" /></svg>
      </button>
      <Tool label="Fit width">
        <path d="M2.500,1h11v14h-11z" fill="#d6edfc" stroke="#4a80b4" />
        <path d="M3.500,8l3,-3v6zM12.500,8l-3,-3v6z" fill="#1868a8" />
      </Tool>
      <Tool label="Fit page">
        <path d="M1.500,1h13v14h-13z" fill="#d6edfc" stroke="#4a80b4" />
        <path d="M8,2.500l2,2H6zM8,13.500l2,-2H6zM3,8l2,-2v4zM13,8l-2,-2v4z" fill="#1868a8" />
        <circle cx="8" cy="8" r="2.500" fill="none" stroke="#5090c0" strokeDasharray="2 1" />
      </Tool>
      <Tool label="Zoom out">
        <circle cx="8" cy="8" r="7.500" fill="#a8dcf8" stroke="#6088a8" />
        <path d="M4,8h8" stroke="#0860a8" strokeWidth="2" />
      </Tool>
      <Tool label="Zoom in">
        <circle cx="8" cy="8" r="7.500" fill="#a8dcf8" stroke="#6088a8" />
        <path d="M4,8h8M8,4v8" stroke="#0860a8" strokeWidth="2" />
      </Tool>
      <span className="h-[22px] w-px bg-[#a0a0a0]" />
      <label htmlFor="find" className="ml-[9px] w-[33px]">Find:</label>
      <input id="find" value={find} onChange={(e) => setFind(e.target.value)} className="h-[20px] w-[160px] border-l border-t border-[#a0a0a0] bg-white px-1 outline-none" />
      <Tool label="Find previous">
        <path d="M1,1h7v5l7,-5v14l-7,-6v6H1z" fill="#999" />
        <path d="M4,4h3v4H4z" fill="#c0c0c0" />
      </Tool>
      <Tool label="Find next">
        <path d="M1,1l7,5V1h7v14H8V9l-7,6z" fill="#999" />
        <path d="M10,4h3v4h-3z" fill="#c0c0c0" />
      </Tool>
      <Tool label="Match case">
        <text x="1" y="15" fontSize="13" fill="#a878f0">A</text>
        <text x="9" y="8" fontSize="11" fontWeight="600" fill="#c048b0">a</text>
      </Tool>
    </div>
  );
}

function Viewer() {
  return (
    <main className="flex min-w-0 flex-1 flex-col">
      <DocumentTabs />
      <Toolbar />
      <div className="flex min-h-0 flex-1 border-t-2 border-[#8c8c8c] bg-[#999999]">
        <div className="flex min-w-0 flex-1 justify-center overflow-hidden border-l border-[#8c8c8c]">
          <div className="h-full w-[645px] bg-white">
            <Board />
          </div>
        </div>
        <div className="flex w-[15px] shrink-0 flex-col border-l border-[#a8a8a8] bg-white">
          <button aria-label="Page up" className="flex h-[15px] items-center justify-center border-b border-[#a8a8a8]"><ChevronUp className="size-3 text-[#505050]" /></button>
          <div className="flex-1" />
          <div className="flex flex-1 items-center justify-center border-y border-[#a8a8a8] bg-[#dadada]">
            <div className="h-[8px] w-[7px] border-y-2 border-[#606060] py-px"><div className="h-[2px] bg-[#606060]" /></div>
          </div>
          <button aria-label="Page down" className="flex h-[15px] items-center justify-center"><ChevronDown className="size-3 text-[#505050]" /></button>
        </div>
      </div>
    </main>
  );
}

export default function App() {
  return (
    <div className="flex h-screen flex-col overflow-hidden border-b-[3px] border-r border-[#66c9e9] bg-[#eeeeee] font-['Liberation_Mono',monospace]">
      <TitleBar />
      <Banner />
      <div className="flex min-h-0 flex-1">
        <Sidebar />
        {/* splitter, the collapse arrow hangs over the sidebar edge */}
        <div className="relative w-px shrink-0 bg-[#eef0f2]">
          <svg viewBox="0 0 5 8" className="absolute right-[2px] top-[379px] h-2 w-[5px]" aria-hidden="true"><path d="M0,0l5,4 -5,4z" fill="#e01818" /></svg>
        </div>
        <Viewer />
      </div>
      <footer className="mt-[3px] flex h-[20px] shrink-0 items-end justify-between bg-[#43668a] text-[10px] leading-[14px]">
        <span className="text-black">Version:1.0.0.52</span>
        <span className="pr-px text-white">Current [XT172x_Component_Location]</span>
      </footer>
    </div>
  );
}
